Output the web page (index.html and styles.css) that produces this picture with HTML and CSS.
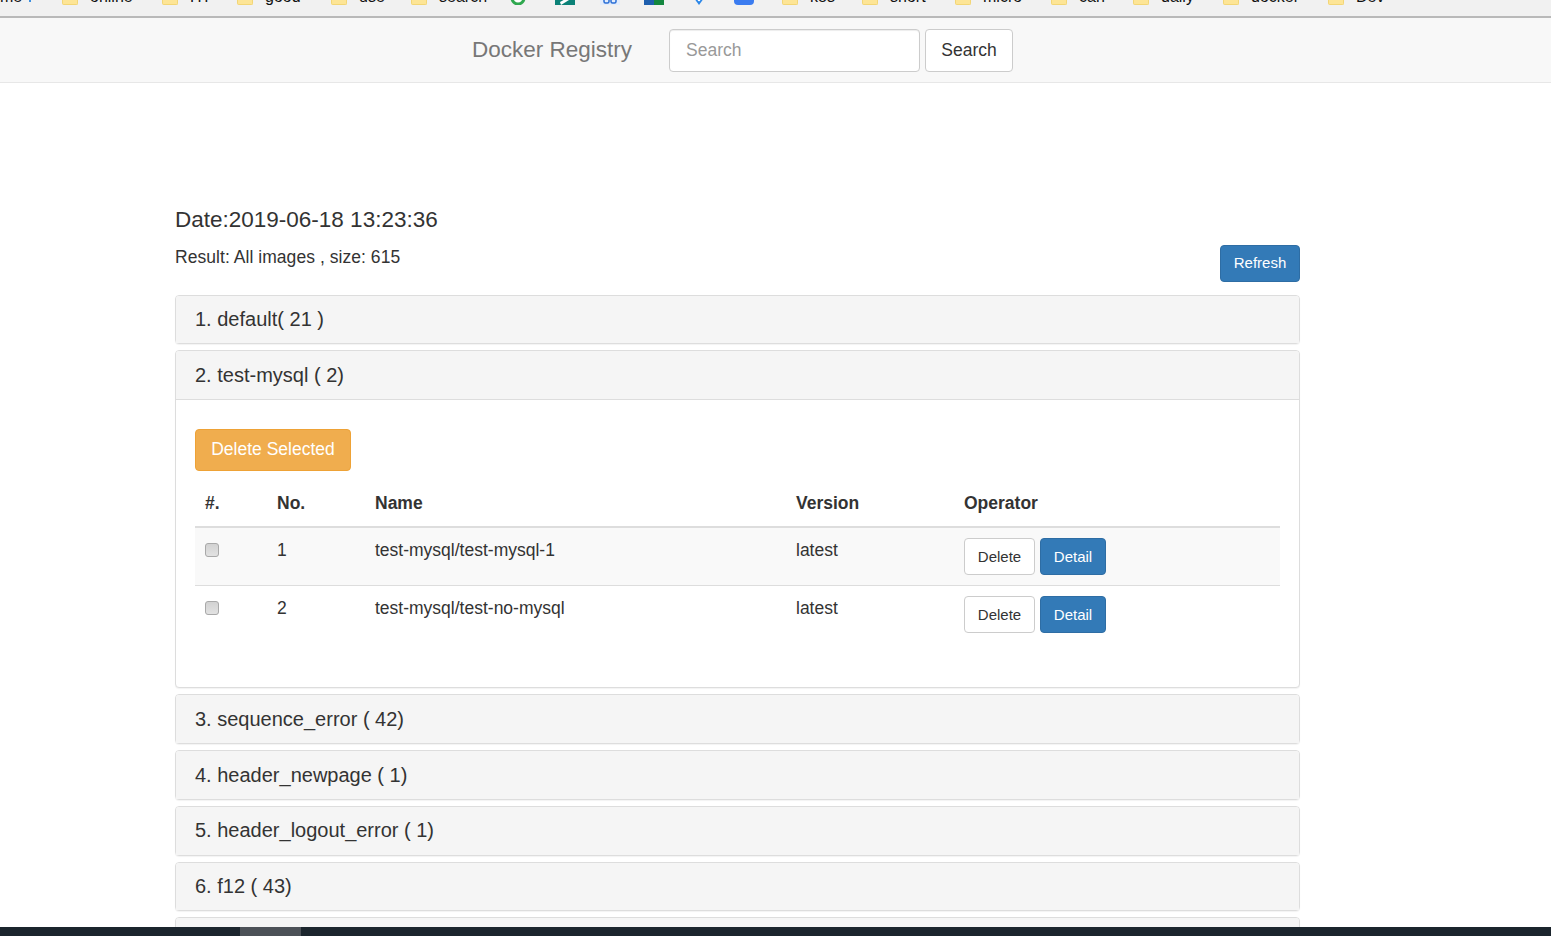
FILE: index.html
```html
<!DOCTYPE html>
<html lang="en">
<head>
<meta charset="utf-8">
<title>Docker Registry</title>
<link rel="stylesheet" href="styles.css">
</head>
<body>
<div class="bookmarks">
  <div class="bm-row">
    <span class="bm"><span>me</span><i class="dot"></i></span>
    <span class="bm"><i class="folder"></i>online</span>
    <span class="bm"><i class="folder"></i>HT</span>
    <span class="bm"><i class="folder"></i>good</span>
    <span class="bm"><i class="folder"></i>use</span>
    <span class="bm"><i class="folder"></i>search</span>
    <span class="bm"><svg class="fav" viewBox="0 0 16 16"><circle cx="8" cy="9" r="6" fill="#fff" stroke="#2fa84f" stroke-width="3"/></svg></span>
    <span class="bm"><svg class="fav fav-wide" viewBox="0 0 20 16"><rect width="20" height="16" fill="#0b8177"/><path d="M6 16l8-5v-3l-9 5z" fill="#fff"/></svg></span>
    <span class="bm"><svg class="fav fav-wide" viewBox="0 0 20 16"><rect width="20" height="16" fill="#e4edfb"/><rect x="4" y="8" width="5" height="6" rx="1.5" fill="none" stroke="#2a6fd6" stroke-width="1.5"/><rect x="11" y="8" width="5" height="6" rx="1.5" fill="none" stroke="#2a6fd6" stroke-width="1.5"/></svg></span>
    <span class="bm"><svg class="fav fav-wide" viewBox="0 0 20 16"><rect y="10" width="20" height="1" fill="#9fb8a8"/><rect y="11" width="10" height="5" fill="#1f5fae"/><rect x="10" y="11" width="10" height="5" fill="#14873f"/></svg></span>
    <span class="bm"><svg class="fav fav-small" viewBox="0 0 8 16"><path d="M4 16L0 10.500 4 8l4 2.500z" fill="#2a86e8"/><circle cx="4" cy="11" r="1.300" fill="#fff"/></svg></span>
    <span class="bm"><svg class="fav fav-wide" viewBox="0 0 20 16"><rect y="-6" width="20" height="22" rx="4" fill="#3b7cf0"/></svg></span>
    <span class="bm"><i class="folder"></i>k8s</span>
    <span class="bm"><i class="folder"></i>short</span>
    <span class="bm"><i class="folder"></i>micro</span>
    <span class="bm"><i class="folder"></i>can</span>
    <span class="bm"><i class="folder"></i>daily</span>
    <span class="bm"><i class="folder"></i>docker</span>
    <span class="bm"><i class="folder"></i>Dev</span>
  </div>
</div>
<nav class="navbar">
  <a class="brand">Docker Registry</a>
  <form class="nav-form">
    <input class="search-input" type="text" placeholder="Search">
    <button class="btn btn-default btn-search" type="button">Search</button>
  </form>
</nav>
<main class="container">
  <h4 class="date">Date:2019-06-18 13:23:36</h4>
  <div class="result-row">
    <span class="result-text">Result: All images , size: 615</span>
    <button class="btn btn-primary btn-refresh" type="button">Refresh</button>
  </div>
  <section class="panel"><div class="panel-heading">1. default( 21 )</div></section>
  <section class="panel">
    <div class="panel-heading">2. test-mysql ( 2)</div>
    <div class="panel-body">
      <button class="btn btn-warning" type="button">Delete Selected</button>
      <table class="table">
        <thead>
          <tr><th class="c1">#.</th><th class="c2">No.</th><th class="c3">Name</th><th class="c4">Version</th><th>Operator</th></tr>
        </thead>
        <tbody>
          <tr class="odd">
            <td><input class="check" type="checkbox"></td><td>1</td><td>test-mysql/test-mysql-1</td><td>latest</td>
            <td class="ops"><button class="btn btn-sm btn-default" type="button">Delete</button><button class="btn btn-sm btn-primary" type="button">Detail</button></td>
          </tr>
          <tr>
            <td><input class="check" type="checkbox"></td><td>2</td><td>test-mysql/test-no-mysql</td><td>latest</td>
            <td class="ops"><button class="btn btn-sm btn-default" type="button">Delete</button><button class="btn btn-sm btn-primary" type="button">Detail</button></td>
          </tr>
        </tbody>
      </table>
    </div>
  </section>
  <section class="panel"><div class="panel-heading">3. sequence_error ( 42)</div></section>
  <section class="panel"><div class="panel-heading">4. header_newpage ( 1)</div></section>
  <section class="panel"><div class="panel-heading">5. header_logout_error ( 1)</div></section>
  <section class="panel"><div class="panel-heading">6. f12 ( 43)</div></section>
  <section class="panel"><div class="panel-heading">&nbsp;</div></section>
</main>
<div class="taskbar"><span class="task-active"></span></div>
</body>
</html>
```

FILE: styles.css
```css
* { box-sizing: border-box; }
html, body { margin: 0; height: 100%; overflow: hidden; }
body {
  position: relative;
  font-family: "Liberation Sans", Arial, sans-serif;
  font-size: 17.5px;
  line-height: 1.42857;
  color: #333;
  background: #fff;
}
.bookmarks {
  height: 18px;
  overflow: hidden;
  background: #f1f1f1;
  border-bottom: 2px solid #b9b9b9;
}
.bm-row {
  display: grid;
  grid-template-columns: 62px 100px 75px 94px 80px 99px 45px 45px 44px 51px 39px 48px 80px 93px 96px 82px 90px 105px 1fr;
  margin-top: -11px;
  height: 16px;
  font-size: 16px;
  line-height: 16px;
  color: #111;
  white-space: nowrap;
}
.bm { display: flex; align-items: flex-end; gap: 12px; height: 16px; }
.dot { display: block; width: 2px; height: 2px; margin: 0 0 3px -5px; background: #3b8fe0; }
.folder { display: block; flex: none; width: 16px; height: 9px; background: #fde596; border: 1px solid #f3d676; border-top: 0; border-radius: 0 0 2px 2px; }
.fav { display: block; width: 16px; height: 16px; flex: none; }
.fav-wide { width: 20px; }
.fav-small { width: 8px; }
.navbar {
  height: 65px;
  display: flex;
  align-items: center;
  padding-left: 472px;
  background: #f8f8f8;
  border-bottom: 1px solid #e7e7e7;
}
.brand { font-size: 22.5px; color: #777; width: 197px; flex: none; }
.nav-form { display: flex; gap: 5px; }
.search-input {
  width: 251px;
  height: 43px;
  padding: 6px 16px;
  font: inherit;
  font-size: 17.5px;
  color: #555;
  background: #fff;
  border: 1px solid #ccc;
  border-radius: 4px;
  box-shadow: inset 0 1px 1px rgba(0,0,0,.075);
}
.search-input::placeholder { color: #999; opacity: 1; }
.btn {
  font-family: inherit;
  border: 1px solid transparent;
  border-radius: 4px;
  cursor: pointer;
}
.btn-default { background: #fff; border-color: #ccc; color: #333; }
.btn-primary { background: #337ab7; border-color: #2e6da4; color: #fff; }
.btn-warning { display: block; background: #f0ad4e; border-color: #eea236; color: #fff; width: 156px; height: 42px; font-size: 17.5px; padding: 0 0 2px; }
.btn-search { width: 88px; height: 43px; font-size: 17.5px; padding: 0; }
.container { width: 1125px; margin-left: 175px; padding-top: 123px; }
.date { margin: 0; font-size: 22.5px; font-weight: 400; line-height: 28px; }
.result-row {
  display: flex;
  justify-content: space-between;
  align-items: flex-start;
  height: 49.6px;
  margin-top: 11px;
  line-height: 25px;
}
.result-text { letter-spacing: 0.05px; }
.btn-refresh { width: 80px; height: 37px; font-size: 15px; padding: 0 0 2px; }
.panel {
  margin-bottom: 6px;
  background: #fff;
  border: 1px solid #ddd;
  border-radius: 4px;
  box-shadow: 0 1px 1px rgba(0,0,0,.05);
}
.panel-heading {
  height: 47.8px;
  padding: 0 19px;
  display: flex;
  align-items: center;
  background: #f5f5f5;
  font-size: 20px;
  border-radius: 3px 3px 0 0;
}
.panel-body { height: 288px; padding: 29px 19px 0; border-top: 1px solid #ddd; }
.table { width: 100%; table-layout: fixed; border-collapse: collapse; margin-top: 15px; line-height: 25px; }
.table th { text-align: left; padding: 5px 10px 10px; font-weight: 700; border-bottom: 2px solid #ddd; color: #333; }
.table td { padding: 10px; height: 58px; vertical-align: top; border-top: 1px solid #ddd; }
.table thead + tbody tr:first-child td { border-top: 0; height: 58px; }
.c1 { width: 72px; }
.c2 { width: 98px; }
.c3 { width: 421px; }
.c4 { width: 168px; }
.odd { background: #f9f9f9; }
.check {
  display: block;
  appearance: none;
  width: 14px;
  height: 14px;
  margin: 5px 0 0;
  background: linear-gradient(#d2d2d2, #e2e2e2);
  border: 1px solid #a9a9a9;
  border-radius: 3px;
}
.ops { white-space: nowrap; }
.btn-sm { height: 37px; font-size: 15px; padding: 0; margin-right: 5px; }
.btn-sm.btn-default { width: 71px; }
.btn-sm.btn-primary { width: 66px; }
.taskbar {
  position: absolute;
  left: 0; right: 0; bottom: 0;
  height: 9px;
  background: #1b252d;
}
.task-active { position: absolute; left: 240px; top: 0; width: 61px; height: 9px; background: #4c5157; }
```
